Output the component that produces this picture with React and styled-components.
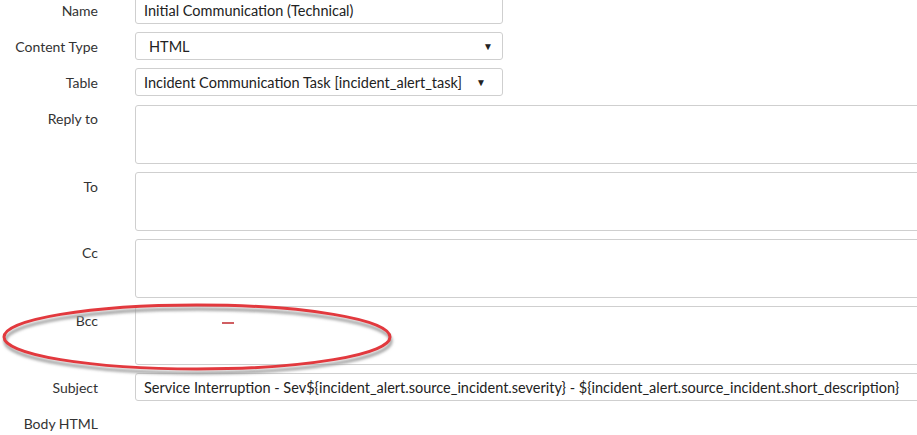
import React from "react";
import styled, { createGlobalStyle } from "styled-components";

const Global = createGlobalStyle`
  html, body {
    margin: 0;
    padding: 0;
    background: #fff;
    overflow: hidden;
  }
  body {
    font-family: Lato, "Open Sans", sans-serif;
    color: #333;
  }
`;

const Page = styled.div`
  position: relative;
  width: 917px;
  height: 435px;
  overflow: hidden;
`;

const Form = styled.div`
  display: flex;
  flex-direction: column;
  gap: 8px;
  margin-top: -4px;
`;

const Row = styled.div`
  display: grid;
  grid-template-columns: 98px 1fr;
  column-gap: 37px;
  align-items: ${(p) => (p.$top ? "start" : "center")};
  margin-top: ${(p) => p.$mt || 0}px;
`;

const Label = styled.label`
  font-size: 14px;
  text-align: right;
  color: #333;
  white-space: nowrap;
  padding-top: ${(p) => p.$pt || 0}px;
`;

const Input = styled.div`
  box-sizing: border-box;
  height: 28px;
  width: ${(p) => p.$w}px;
  border: 1px solid #cfcfcf;
  border-radius: 3px;
  padding: 0 8px;
  display: flex;
  align-items: center;
  font-size: 14.5px;
  color: #222;
  white-space: nowrap;
  overflow: hidden;
`;

const Select = styled(Input)`
  justify-content: space-between;
  padding-left: ${(p) => p.$pl || 8}px;
  padding-right: ${(p) => p.$pr || 8}px;
`;

const Arrow = styled.span`
  font-size: 10px;
  color: #222;
`;

const Area = styled.div`
  box-sizing: border-box;
  height: 59px;
  width: 820px;
  border: 1px solid #cfcfcf;
  border-radius: 3px;
`;

const Mark = styled.svg`
  position: absolute;
  left: 0;
  top: 299px;
  pointer-events: none;
`;

export default function App() {
  return (
    <>
      <Global />
      <Page>
        <Form>
          <Row>
            <Label>Name</Label>
            <Input $w={368}>Initial Communication (Technical)</Input>
          </Row>
          <Row>
            <Label>Content Type</Label>
            <Select $w={368} $pl={13} $pr={9}>
              <span>HTML</span>
              <Arrow>▼</Arrow>
            </Select>
          </Row>
          <Row>
            <Label>Table</Label>
            <Select $w={368} $pr={16}>
              <span>Incident Communication Task [incident_alert_task]</span>
              <Arrow>▼</Arrow>
            </Select>
          </Row>
          <Row $top $mt={1}>
            <Label $pt={5}>Reply to</Label>
            <Area />
          </Row>
          <Row $top>
            <Label $pt={6}>To</Label>
            <Area />
          </Row>
          <Row $top>
            <Label $pt={5}>Cc</Label>
            <Area />
          </Row>
          <Row $top>
            <Label $pt={6}>Bcc</Label>
            <Area />
          </Row>
          <Row>
            <Label>Subject</Label>
            <Input $w={820}>
              Service Interruption - Sev{"${incident_alert.source_incident.severity}"} - {"${incident_alert.source_incident.short_description}"}
            </Input>
          </Row>
          <Row $mt={6}>
            <Label>Body HTML</Label>
            <span />
          </Row>
        </Form>
        <Mark width="400" height="80" viewBox="0 0 400 80">
          <defs>
            <filter id="sh" x="-5%" y="-20%" width="110%" height="140%">
              <feGaussianBlur stdDeviation="1.5" />
            </filter>
          </defs>
          <ellipse cx="197" cy="40" rx="193" ry="32" fill="none" stroke="#9a9a9a" strokeWidth="3" filter="url(#sh)" transform="translate(1 2)" />
          <ellipse cx="197" cy="38" rx="193" ry="32" fill="none" stroke="#e2393e" strokeWidth="3" />
          <line x1="222" y1="24" x2="234" y2="24" stroke="#c0282e" strokeWidth="1.5" />
        </Mark>
      </Page>
    </>
  );
}
